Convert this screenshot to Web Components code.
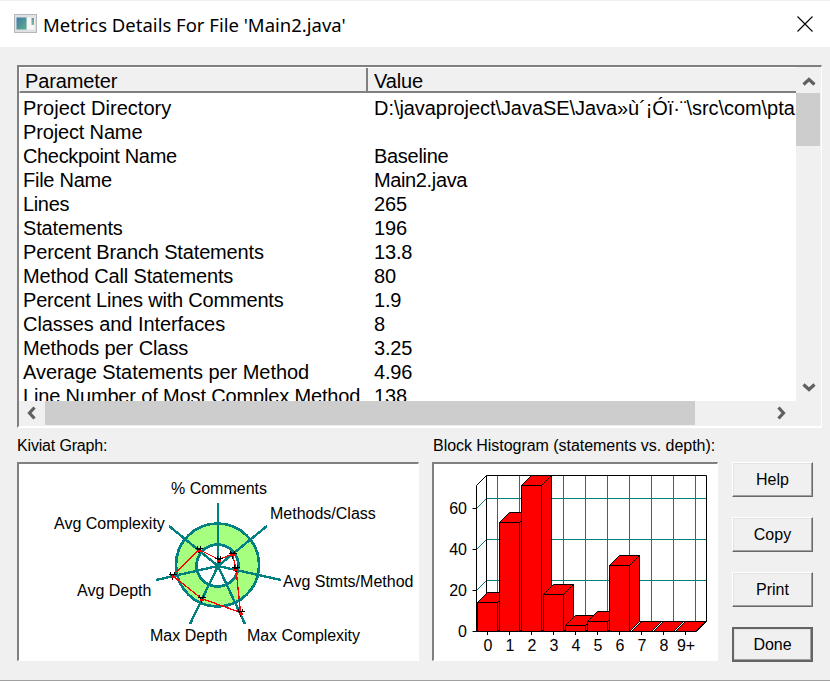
<!DOCTYPE html>
<html><head><meta charset="utf-8"><style>
html,body{margin:0;padding:0;background:#f0f0f0}
</style></head><body>
<metrics-dialog>
  <title-bar slot="title">Metrics Details For File 'Main2.java'</title-bar>
  <metric-table slot="table">
    <metric-row name="Project Directory" value="D:\javaproject\JavaSE\Java»ù´¡Óï·¨\src\com\pta" ls="0.03" vls="-0.06"></metric-row>
    <metric-row name="Project Name" value=""></metric-row>
    <metric-row name="Checkpoint Name" value="Baseline" ls="-0.35" vls="-0.3"></metric-row>
    <metric-row name="File Name" value="Main2.java" ls="-0.26" vls="-0.37"></metric-row>
    <metric-row name="Lines" value="265" ls="-0.35"></metric-row>
    <metric-row name="Statements" value="196"></metric-row>
    <metric-row name="Percent Branch Statements" value="13.8"></metric-row>
    <metric-row name="Method Call Statements" value="80"></metric-row>
    <metric-row name="Percent Lines with Comments" value="1.9" ls="-0.19"></metric-row>
    <metric-row name="Classes and Interfaces" value="8" ls="-0.06"></metric-row>
    <metric-row name="Methods per Class" value="3.25" ls="-0.09"></metric-row>
    <metric-row name="Average Statements per Method" value="4.96" ls="-0.05"></metric-row>
    <metric-row name="Line Number of Most Complex Method" value="138"></metric-row>
  </metric-table>
  <graph-panel slot="kiviat" label="Kiviat Graph:" ls="-0.17" style="width:402px"><kiviat-graph></kiviat-graph></graph-panel>
  <graph-panel slot="histogram" label="Block Histogram (statements vs. depth):" inset style="width:286px"><block-histogram></block-histogram></graph-panel>
  <push-button slot="buttons">Help</push-button>
  <push-button slot="buttons">Copy</push-button>
  <push-button slot="buttons">Print</push-button>
  <push-button slot="buttons" default>Done</push-button>
</metrics-dialog>
<script>
const FONT='"Liberation Sans",Arial,sans-serif';
function def(name,html){
  customElements.define(name,class extends HTMLElement{
    connectedCallback(){
      if(this.shadowRoot)return;
      const r=this.attachShadow({mode:'open'});
      r.innerHTML=typeof html==='function'?html(this):html;
    }
  });
}
def('metrics-dialog',`<style>
:host{display:flex;flex-direction:column;width:830px;height:681px;box-sizing:border-box;background:#f0f0f0;font-family:${FONT};color:#000;border-bottom:1px solid #a0a0a0;overflow:hidden}
main{display:flex;flex-direction:column;padding:18px 8px 0 17px}
.bottom{display:flex;margin-top:8px}
.gap{width:13px;flex:none}
.btns{display:flex;flex-direction:column;gap:20px;margin-left:14px;margin-top:26px}
</style><slot name="title"></slot><main><slot name="table"></slot><div class="bottom"><slot name="kiviat"></slot><div class="gap"></div><slot name="histogram"></slot><div class="btns"><slot name="buttons"></slot></div></div></main>`);
def('title-bar',`<style>
:host{display:flex;align-items:center;height:47px;background:#fff;box-sizing:border-box;border-top:1px solid #f0f0f0;padding-left:14px;font:18.500px "Noto Sans",sans-serif;color:#000}
svg.i{width:23px;height:19px;margin-right:6px;flex:none;margin-top:-2px}
.t{flex:1;white-space:pre}
svg.x{width:16px;height:16px;margin-right:17px;flex:none;margin-top:-1px}
</style>
<svg class="i" viewBox="0 0 23 19"><defs><linearGradient id="g" x1="0" y1="0" x2="1" y2="1"><stop offset="0" stop-color="#3f78a8"/><stop offset="1" stop-color="#5fb08a"/></linearGradient><linearGradient id="h" x1="0" y1="0" x2="0" y2="1"><stop offset="0" stop-color="#6f8fa0"/><stop offset="1" stop-color="#7fbfa0"/></linearGradient></defs><rect x=".5" y=".5" width="22" height="18" fill="#dfe2e5" stroke="#b4b8bc"/><rect x="2.500" y="3.500" width="10" height="12" fill="url(#g)"/><rect x="13" y="3.500" width="7.500" height="12" fill="#f8f8f8"/><rect x="17.500" y="4" width="2.500" height="7" fill="url(#h)"/></svg>
<span class="t"><slot></slot></span>
<svg class="x" viewBox="0 0 16 16"><path d="M.5.5l15 15M15.500.5l-15 15" stroke="#000" stroke-width="1.100" fill="none"/></svg>`);
const chev={
 up:'M-5.500 2.500L0-2.500L5.500 2.500',down:'M-5.500-2.500L0 2.500L5.500-2.500',left:'M2.500-5.500L-2.500 0L2.500 5.500',right:'M-2.500-5.500L2.500 0L-2.500 5.500'};
def('scroll-arrow',e=>`<style>:host{display:flex;align-items:center;justify-content:center;flex:none;box-sizing:border-box;width:25px;height:25px}svg{width:16px;height:16px}</style><svg viewBox="-8 -8 16 16"><path d="${chev[e.getAttribute('dir')]}" fill="none" stroke="#606060" stroke-width="3.200"/></svg>`);
def('metric-table',`<style>
:host{display:grid;grid-template-columns:777px 25px;grid-template-rows:26px 308px 24px;width:805px;height:363px;box-sizing:border-box;border-top:2px solid #808080;border-left:2px solid #808080;border-right:1px solid #fff;border-bottom:2px solid #fff;background:#f0f0f0;overflow:hidden}
.head{display:grid;grid-template-columns:348px 1fr;font-size:20px;letter-spacing:-.12px;line-height:27px;border-bottom:2px solid #808080;box-sizing:border-box;height:26px;background:#f0f0f0;border-left:1px solid #fff;border-top:1px solid #fff}
.head div{padding-left:5px;white-space:nowrap}
.head div:first-child{border-right:2px solid #808080;box-sizing:border-box}
.head div:last-child{padding-left:6px}
.rows{background:#fff;overflow:hidden;padding-top:3px;box-sizing:border-box}
.vs{grid-column:2;grid-row:1/3;display:flex;flex-direction:column;background:#f0f0f0}
.track{flex:1;display:flex;flex-direction:column}
.vthumb{width:24px;height:53px;background:#cdcdcd;margin-bottom:auto}
.hs{grid-column:1/3;grid-row:3;display:flex;background:#f0f0f0;height:24px}
.hthumb{width:650px;height:24px;background:#cdcdcd}
</style>
<div class="head"><div>Parameter</div><div>Value</div></div>
<div class="vs"><scroll-arrow dir="up" style="height:26px;padding-top:3px"></scroll-arrow><div class="track"><div class="vthumb"></div><scroll-arrow dir="down" style="height:28px"></scroll-arrow></div></div>
<div class="rows"><slot></slot></div>
<div class="hs"><scroll-arrow dir="left" style="height:24px;width:26px"></scroll-arrow><div class="hthumb"></div><div style="flex:1"></div><scroll-arrow dir="right" style="height:24px;margin-right:28px"></scroll-arrow></div>`);
def('metric-row',e=>`<style>
:host{display:grid;grid-template-columns:351px 1fr;height:24px;font-size:20px;line-height:24px;white-space:nowrap}
div{padding-left:4px;overflow:hidden;letter-spacing:${e.getAttribute('ls')||'-0.15'}px}
div+div{letter-spacing:${e.getAttribute('vls')||'-0.17'}px}
</style><div>${e.getAttribute('name')}</div><div>${e.getAttribute('value')}</div>`);
def('graph-panel',e=>`<style>
:host{display:flex;flex-direction:column;box-sizing:border-box;font-size:16px}
.l{height:26px;line-height:20px;white-space:nowrap;letter-spacing:${e.getAttribute('ls')||'-0.04'}px;margin-left:${e.hasAttribute('inset')?1:0}px}
.f{box-sizing:border-box;height:199px;border-top:2px solid #808080;border-left:2px solid #808080;border-right:1px solid #fff;border-bottom:1px solid #fff;background:#fff;overflow:hidden}
</style><div class="l">${e.getAttribute('label')}</div><div class="f"><slot></slot></div>`);
const spokes=[[218,503],[267,526],[281,580],[245,624],[190,624],[156,580],[169,526]];
const pts=[[219,559.5],[232.5,554],[236,568.5],[240.5,612.5],[201.5,598.5],[172.5,575.5],[199,549.5]];
def('kiviat-graph',`<style>:host{display:block}svg{display:block;font:16px ${FONT}}</style>
<svg width="399" height="196" viewBox="19 464 399 196">
<circle cx="217.500" cy="565" r="31.500" fill="none" stroke="#a6ff7f" stroke-width="21" shape-rendering="crispEdges"/>
<circle cx="217.500" cy="565" r="41.500" fill="none" stroke="#008080" stroke-width="2.700" shape-rendering="crispEdges"/>
<circle cx="217.500" cy="565.500" r="21" fill="none" stroke="#008080" stroke-width="2.700" shape-rendering="crispEdges"/>
${spokes.map(p=>`<line x1="218" y1="566" x2="${p[0]}" y2="${p[1]}" stroke="#008080" stroke-width="2.400" shape-rendering="crispEdges"/>`).join('')}
<polygon points="${pts.map(p=>p.join(',')).join(' ')}" fill="none" stroke="#f00" stroke-width="1.300" shape-rendering="crispEdges"/>
${pts.map(p=>`<path d="M${p[0]-4} ${p[1]-1}h8M${p[0]-2} ${p[1]-3}l2 6l2 -6" fill="none" stroke="#000" stroke-width="1" shape-rendering="crispEdges"/><rect x="${p[0]-2}" y="${p[1]}" width="4" height="2" fill="#f00" shape-rendering="crispEdges"/>`).join('')}
<text x="219" y="494" text-anchor="middle">% Comments</text>
<text x="270" y="519">Methods/Class</text>
<text x="283" y="587">Avg Stmts/Method</text>
<text x="247" y="641" letter-spacing="-0.07">Max Complexity</text>
<text x="150" y="641">Max Depth</text>
<text x="77" y="596">Avg Depth</text>
<text x="54" y="529">Avg Complexity</text>
</svg>`);
const tops=[602.5,522.5,485.5,594.5,625.5,621.5,565.5,631.5,631.5,631.5];
function bar(i,t){
 const x=477.500+22*i,w=20,b=631.500,d=10;
 return `<path d="M${x} ${t}l${d} -${d}h${w}l-${d} ${d}zM${x+w} ${t}l${d} -${d}V${b-d}l-${d} ${d}z" fill="#f00" stroke="#000"/><rect x="${x}" y="${t}" width="${w}" height="${b-t}" fill="#f00" stroke="#000"/>`;
}
const vg=[0,1,2,3,4,5,6,7,8,9].map(i=>`<line x1="${497.500+22*i}" y1="475.500" x2="${497.500+22*i}" y2="621.500" stroke="#008080"/>`).join('');
const hg=[498.500,539.500,580.500].map(y=>`<path d="M476.500 ${y+10}L486.500 ${y}H706" fill="none" stroke="#008080"/>`).join('');
const xl=['0','1','2','3','4','5','6','7','8','9+'];
def('block-histogram',`<style>:host{display:block}svg{display:block;font:16px ${FONT}}</style>
<svg width="283" height="196" viewBox="434 464 283 196">
${hg}${vg}
<path d="M476.500 485.500L486.500 475.500H706.500V621.500L696.500 631.500H476.500V485.500M486.500 475.500V621.500H706.500" fill="none" stroke="#000"/>
<path d="M472.500 508.500h4M472.500 549.500h4M472.500 590.500h4M472.500 631.500h4" stroke="#000"/>
${xl.map((s,i)=>`<line x1="${487.500+22*i}" y1="631" x2="${487.500+22*i}" y2="635" stroke="#000"/>`).join('')}
${tops.map((t,i)=>bar(i,t)).join('')}
${[['60',508],['40',549],['20',590],['0',631]].map(a=>`<text x="467" y="${a[1]+6}" text-anchor="end">${a[0]}</text>`).join('')}
${xl.map((s,i)=>`<text x="${488+22*i}" y="651" text-anchor="middle">${s}</text>`).join('')}
</svg>`);
def('push-button',e=>`<style>
:host{display:flex;align-items:center;justify-content:center;box-sizing:border-box;width:81px;height:35px;font-size:16px;background:#f0f0f0;border:1px solid;border-color:#fff #696969 #696969 #fff;box-shadow:inset -1px -1px 0 #a0a0a0,inset 1px 1px 0 #e3e3e3;${e.hasAttribute('default')?'border:2px solid #646464;':''}}
</style><slot></slot>`);
</script>
</body></html>
